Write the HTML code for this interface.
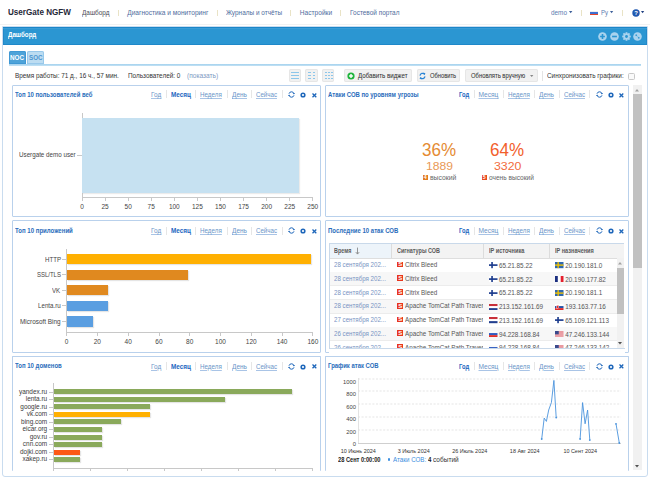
<!DOCTYPE html><html><head><meta charset="utf-8"><style>
html,body{margin:0;padding:0;width:650px;height:479px;overflow:hidden;background:#fff;font-family:"Liberation Sans", sans-serif;}
.t{position:absolute;white-space:nowrap;}
</style></head><body>
<div style="position:absolute;left:118.1px;top:9.5px;width:1.0px;height:6.5px;background:#e9e3c6;"></div>
<div style="position:absolute;left:216.5px;top:9.5px;width:1.0px;height:6.5px;background:#e9e3c6;"></div>
<div style="position:absolute;left:290.3px;top:9.5px;width:1.0px;height:6.5px;background:#e9e3c6;"></div>
<div style="position:absolute;left:340.3px;top:9.5px;width:1.0px;height:6.5px;background:#e9e3c6;"></div>
<div style="position:absolute;left:580.5px;top:9.5px;width:1.0px;height:6.5px;background:#e9e3c6;"></div>
<div style="position:absolute;left:621.9px;top:9.5px;width:1.0px;height:6.5px;background:#e9e3c6;"></div>
<svg style="position:absolute;left:568.5px;top:11px" width="4" height="3"><path d="M0 0H3.4L1.7 2.2Z" fill="#3d5f99"/></svg>
<div style="position:absolute;left:590px;top:10.5px;width:8px;height:1.5999999999999996px;background:#e9ecf2;"></div>
<div style="position:absolute;left:590px;top:12.1px;width:8px;height:1.5px;background:#3d6fd0;"></div>
<div style="position:absolute;left:590px;top:13.6px;width:8px;height:1.5999999999999996px;background:#e5452a;"></div>
<svg style="position:absolute;left:609.8px;top:11px" width="4" height="3"><path d="M0 0H3.2L1.6 2.2Z" fill="#3d5f99"/></svg>
<svg style="position:absolute;left:631.5px;top:8.5px" width="8" height="8" viewBox="0 0 8 8"><circle cx="4" cy="4" r="3.7" fill="#1f58b0"/><text x="4" y="6.4" font-size="6" font-weight="bold" text-anchor="middle" fill="#fff" font-family="Liberation Sans">?</text></svg>
<svg style="position:absolute;left:641.2px;top:11px" width="4" height="3"><path d="M0 0H3.2L1.6 2.2Z" fill="#1f3f80"/></svg>
<div style="position:absolute;left:0px;top:24px;width:650px;height:0.6000000000000014px;background:#f2f2f2;"></div>
<div style="position:absolute;left:2px;top:26px;width:644px;height:449px;border:1px solid #c9dcef;border-radius:0 0 3px 3px;background:#fff;"></div>
<div style="position:absolute;left:2.5px;top:26.5px;width:644.5px;height:18.299999999999997px;background:#2b96d2;box-shadow:inset 0 1px 0 #1b86c8, inset 0 2px 0 #3a9cd6, inset 0 -1px 0 #1f88c9, inset 1px 0 0 #2289c9, inset -1px 0 0 #2289c9;"></div>
<svg style="position:absolute;left:598.4px;top:31.6px" width="9" height="9" viewBox="0 0 9 9"><circle cx="4.5" cy="4.5" r="4.3" fill="#a9d3ee"/><path d="M4.5 2.1V6.9M2.1 4.5H6.9" stroke="#2a95d1" stroke-width="1.6"/></svg>
<svg style="position:absolute;left:610.0px;top:31.6px" width="9" height="9" viewBox="0 0 9 9"><circle cx="4.5" cy="4.5" r="4.3" fill="#a9d3ee"/><path d="M2.1 4.5H6.9" stroke="#2a95d1" stroke-width="1.6"/></svg>
<svg style="position:absolute;left:621.8px;top:31.6px" width="9" height="9" viewBox="0 0 9 9"><g fill="#a9d3ee"><circle cx="4.5" cy="4.5" r="3.2"/><rect x="3.6" y="0.2" width="1.8" height="8.6" transform="rotate(0 4.5 4.5)"/><rect x="3.6" y="0.2" width="1.8" height="8.6" transform="rotate(45 4.5 4.5)"/><rect x="3.6" y="0.2" width="1.8" height="8.6" transform="rotate(90 4.5 4.5)"/><rect x="3.6" y="0.2" width="1.8" height="8.6" transform="rotate(135 4.5 4.5)"/></g><circle cx="4.5" cy="4.5" r="1.4" fill="#2a95d1"/></svg>
<svg style="position:absolute;left:633.3px;top:31.6px" width="9" height="9" viewBox="0 0 9 9"><circle cx="4.5" cy="4.5" r="4.3" fill="#a9d3ee"/><path d="M2.0 3.3L3.3 2.0L4.5 4.5ZM7.0 5.7L5.7 7.0L4.5 4.5Z" fill="#2a95d1"/></svg>
<div style="position:absolute;left:8.8px;top:50.9px;width:17.0px;height:12.700000000000003px;background:#4ea3d9;border-radius:2px 2px 0 0;box-shadow:inset 0 0 0 1px #3f98d4;"></div>
<div style="position:absolute;left:27.2px;top:50.9px;width:16.599999999999998px;height:12.700000000000003px;background:#bcdcf1;border-radius:2px 2px 0 0;box-shadow:inset 0 0 0 1px #98c8ea;"></div>
<div style="position:absolute;left:8.5px;top:63.9px;width:632.9px;height:2.500000000000007px;background:linear-gradient(#a3d1ee,#c5e3f5);"></div>
<div style="position:absolute;left:288.6px;top:69.4px;width:12.299999999999955px;height:12.299999999999997px;background:#f1f1f1;border-radius:2px;box-shadow:inset 0 0 0 1px #e6e6e6;"></div>
<div style="position:absolute;left:305.4px;top:69.4px;width:12.300000000000011px;height:12.299999999999997px;background:#f1f1f1;border-radius:2px;box-shadow:inset 0 0 0 1px #e6e6e6;"></div>
<div style="position:absolute;left:322.4px;top:69.4px;width:12.100000000000023px;height:12.299999999999997px;background:#f1f1f1;border-radius:2px;box-shadow:inset 0 0 0 1px #e6e6e6;"></div>
<div style="position:absolute;left:291.2px;top:72px;width:7.400000000000034px;height:1px;background:#8cc6ea;"></div>
<div style="position:absolute;left:291.2px;top:75px;width:7.400000000000034px;height:1px;background:#8cc6ea;"></div>
<div style="position:absolute;left:291.2px;top:78px;width:7.400000000000034px;height:1px;background:#8cc6ea;"></div>
<div style="position:absolute;left:308.0px;top:72px;width:2.8000000000000114px;height:1px;background:#8cc6ea;"></div>
<div style="position:absolute;left:312.6px;top:72px;width:2.8000000000000114px;height:1px;background:#8cc6ea;"></div>
<div style="position:absolute;left:308.0px;top:75px;width:2.8000000000000114px;height:1px;background:#8cc6ea;"></div>
<div style="position:absolute;left:312.6px;top:75px;width:2.8000000000000114px;height:1px;background:#8cc6ea;"></div>
<div style="position:absolute;left:308.0px;top:78px;width:2.8000000000000114px;height:1px;background:#8cc6ea;"></div>
<div style="position:absolute;left:312.6px;top:78px;width:2.8000000000000114px;height:1px;background:#8cc6ea;"></div>
<div style="position:absolute;left:325.0px;top:72px;width:2.1999999999999886px;height:1px;background:#8cc6ea;"></div>
<div style="position:absolute;left:327.95px;top:72px;width:2.1999999999999886px;height:1px;background:#8cc6ea;"></div>
<div style="position:absolute;left:330.9px;top:72px;width:2.1999999999999886px;height:1px;background:#8cc6ea;"></div>
<div style="position:absolute;left:325.0px;top:75px;width:2.1999999999999886px;height:1px;background:#8cc6ea;"></div>
<div style="position:absolute;left:327.95px;top:75px;width:2.1999999999999886px;height:1px;background:#8cc6ea;"></div>
<div style="position:absolute;left:330.9px;top:75px;width:2.1999999999999886px;height:1px;background:#8cc6ea;"></div>
<div style="position:absolute;left:325.0px;top:78px;width:2.1999999999999886px;height:1px;background:#8cc6ea;"></div>
<div style="position:absolute;left:327.95px;top:78px;width:2.1999999999999886px;height:1px;background:#8cc6ea;"></div>
<div style="position:absolute;left:330.9px;top:78px;width:2.1999999999999886px;height:1px;background:#8cc6ea;"></div>
<div style="position:absolute;left:344.2px;top:69.4px;width:67.60000000000002px;height:12.299999999999997px;background:#f1f1f1;border-radius:2px;box-shadow:inset 0 0 0 1px #e6e6e6;"></div>
<svg style="position:absolute;left:346.6px;top:71.8px" width="8" height="8" viewBox="0 0 8 8"><circle cx="4" cy="4" r="3.6" fill="#1fb43c"/><path d="M4 2.1V5.9M2.1 4H5.9" stroke="#fff" stroke-width="1.4"/></svg>
<div style="position:absolute;left:416.5px;top:69.4px;width:43.80000000000001px;height:12.299999999999997px;background:#f1f1f1;border-radius:2px;box-shadow:inset 0 0 0 1px #e6e6e6;"></div>
<svg style="position:absolute;left:419.2px;top:72px" width="7" height="8" viewBox="0 0 7 8"><path d="M1 3.6A2.6 2.6 0 0 1 5.6 2.3" stroke="#2c86d6" stroke-width="1.2" fill="none"/><path d="M4.2 0.6L6.4 1.2L5.6 3.3Z" fill="#2c86d6"/><path d="M6 4.4A2.6 2.6 0 0 1 1.4 5.7" stroke="#2c86d6" stroke-width="1.2" fill="none"/><path d="M2.8 7.4L0.6 6.8L1.4 4.7Z" fill="#2c86d6"/></svg>
<div style="position:absolute;left:465.4px;top:69.4px;width:72.20000000000005px;height:12.299999999999997px;background:#f1f1f1;border-radius:2px;box-shadow:inset 0 0 0 1px #e6e6e6;"></div>
<svg style="position:absolute;left:529.5px;top:74.7px" width="4" height="3"><path d="M0 0H3.4L1.7 2Z" fill="#888"/></svg>
<div style="position:absolute;left:542.2px;top:70.5px;width:0.6999999999999318px;height:10.0px;background:#e4e4e4;"></div>
<div style="position:absolute;left:627.9px;top:73px;width:6.899999999999977px;height:6.599999999999994px;border:0.8px solid #c8c8c8;border-radius:1.5px;box-sizing:border-box;background:#fafafa;"></div>
<div style="position:absolute;left:633px;top:85px;width:8.5px;height:385px;background:#f1f1f1;"></div>
<div style="position:absolute;left:633px;top:94px;width:8.5px;height:174px;background:#c1c1c1;"></div>
<svg style="position:absolute;left:635.3px;top:88.5px" width="4" height="3"><path d="M0 2.5H4L2 0Z" fill="#a3a3a3"/></svg>
<svg style="position:absolute;left:635.3px;top:465px" width="4" height="3"><path d="M0 0H4L2 2.5Z" fill="#505050"/></svg>
<div style="position:absolute;left:12px;top:85px;width:307px;height:129.5px;border:1px solid #b9d1ec;border-radius:1px;"></div>
<div style="position:absolute;left:166.45000000000002px;top:90.4px;width:0.6999999999999886px;height:8.0px;background:#e6e6e6;"></div>
<div style="position:absolute;left:195.05px;top:90.4px;width:0.6999999999999886px;height:8.0px;background:#e6e6e6;"></div>
<div style="position:absolute;left:226.95000000000002px;top:90.4px;width:0.6999999999999886px;height:8.0px;background:#e6e6e6;"></div>
<div style="position:absolute;left:251.35px;top:90.4px;width:0.6999999999999886px;height:8.0px;background:#e6e6e6;"></div>
<div style="position:absolute;left:281.75px;top:90.4px;width:0.7000000000000455px;height:8.0px;background:#e6e6e6;"></div>
<svg style="position:absolute;left:288.1px;top:90.9px" width="7" height="7" viewBox="0 0 7 7"><path d="M1.0 2.7A2.6 2.6 0 0 1 5.9 2.4" stroke="#1d66ba" stroke-width="1.0" fill="none"/><path d="M4.7 2.1H7.0L5.9 3.5Z" fill="#1d66ba"/><path d="M6.0 4.3A2.6 2.6 0 0 1 1.1 4.6" stroke="#1d66ba" stroke-width="1.0" fill="none"/><path d="M2.3 4.9H0L1.1 3.5Z" fill="#1d66ba"/></svg>
<svg style="position:absolute;left:300px;top:91.60000000000001px" width="6" height="6" viewBox="0 0 6 6"><circle cx="3" cy="3" r="1.85" stroke="#1d66ba" stroke-width="1.5" fill="none"/></svg>
<svg style="position:absolute;left:311.79999999999995px;top:92.5px" width="5" height="5" viewBox="0 0 5 5"><path d="M0.5 0.5L4.3 4.3M4.3 0.5L0.5 4.3" stroke="#1d66ba" stroke-width="1.3"/></svg>
<div style="position:absolute;left:325px;top:85px;width:301.5px;height:129.5px;border:1px solid #b9d1ec;border-radius:1px;"></div>
<div style="position:absolute;left:473.95px;top:90.4px;width:0.7000000000000455px;height:8.0px;background:#e6e6e6;"></div>
<div style="position:absolute;left:502.54999999999995px;top:90.4px;width:0.7000000000000455px;height:8.0px;background:#e6e6e6;"></div>
<div style="position:absolute;left:534.4499999999999px;top:90.4px;width:0.7000000000000455px;height:8.0px;background:#e6e6e6;"></div>
<div style="position:absolute;left:558.85px;top:90.4px;width:0.7000000000000455px;height:8.0px;background:#e6e6e6;"></div>
<div style="position:absolute;left:589.25px;top:90.4px;width:0.7000000000000455px;height:8.0px;background:#e6e6e6;"></div>
<svg style="position:absolute;left:595.6px;top:90.9px" width="7" height="7" viewBox="0 0 7 7"><path d="M1.0 2.7A2.6 2.6 0 0 1 5.9 2.4" stroke="#1d66ba" stroke-width="1.0" fill="none"/><path d="M4.7 2.1H7.0L5.9 3.5Z" fill="#1d66ba"/><path d="M6.0 4.3A2.6 2.6 0 0 1 1.1 4.6" stroke="#1d66ba" stroke-width="1.0" fill="none"/><path d="M2.3 4.9H0L1.1 3.5Z" fill="#1d66ba"/></svg>
<svg style="position:absolute;left:607.5px;top:91.60000000000001px" width="6" height="6" viewBox="0 0 6 6"><circle cx="3" cy="3" r="1.85" stroke="#1d66ba" stroke-width="1.5" fill="none"/></svg>
<svg style="position:absolute;left:619.3px;top:92.5px" width="5" height="5" viewBox="0 0 5 5"><path d="M0.5 0.5L4.3 4.3M4.3 0.5L0.5 4.3" stroke="#1d66ba" stroke-width="1.3"/></svg>
<div style="position:absolute;left:12px;top:220px;width:307px;height:130.5px;border:1px solid #b9d1ec;border-radius:1px;"></div>
<div style="position:absolute;left:166.45000000000002px;top:226.5px;width:0.6999999999999886px;height:8.0px;background:#e6e6e6;"></div>
<div style="position:absolute;left:195.05px;top:226.5px;width:0.6999999999999886px;height:8.0px;background:#e6e6e6;"></div>
<div style="position:absolute;left:226.95000000000002px;top:226.5px;width:0.6999999999999886px;height:8.0px;background:#e6e6e6;"></div>
<div style="position:absolute;left:251.35px;top:226.5px;width:0.6999999999999886px;height:8.0px;background:#e6e6e6;"></div>
<div style="position:absolute;left:281.75px;top:226.5px;width:0.7000000000000455px;height:8.0px;background:#e6e6e6;"></div>
<svg style="position:absolute;left:288.1px;top:227.0px" width="7" height="7" viewBox="0 0 7 7"><path d="M1.0 2.7A2.6 2.6 0 0 1 5.9 2.4" stroke="#1d66ba" stroke-width="1.0" fill="none"/><path d="M4.7 2.1H7.0L5.9 3.5Z" fill="#1d66ba"/><path d="M6.0 4.3A2.6 2.6 0 0 1 1.1 4.6" stroke="#1d66ba" stroke-width="1.0" fill="none"/><path d="M2.3 4.9H0L1.1 3.5Z" fill="#1d66ba"/></svg>
<svg style="position:absolute;left:300px;top:227.7px" width="6" height="6" viewBox="0 0 6 6"><circle cx="3" cy="3" r="1.85" stroke="#1d66ba" stroke-width="1.5" fill="none"/></svg>
<svg style="position:absolute;left:311.79999999999995px;top:228.6px" width="5" height="5" viewBox="0 0 5 5"><path d="M0.5 0.5L4.3 4.3M4.3 0.5L0.5 4.3" stroke="#1d66ba" stroke-width="1.3"/></svg>
<div style="position:absolute;left:325px;top:220px;width:301.5px;height:130.5px;border:1px solid #b9d1ec;border-radius:1px;"></div>
<div style="position:absolute;left:473.95px;top:226.5px;width:0.7000000000000455px;height:8.0px;background:#e6e6e6;"></div>
<div style="position:absolute;left:502.54999999999995px;top:226.5px;width:0.7000000000000455px;height:8.0px;background:#e6e6e6;"></div>
<div style="position:absolute;left:534.4499999999999px;top:226.5px;width:0.7000000000000455px;height:8.0px;background:#e6e6e6;"></div>
<div style="position:absolute;left:558.85px;top:226.5px;width:0.7000000000000455px;height:8.0px;background:#e6e6e6;"></div>
<div style="position:absolute;left:589.25px;top:226.5px;width:0.7000000000000455px;height:8.0px;background:#e6e6e6;"></div>
<svg style="position:absolute;left:595.6px;top:227.0px" width="7" height="7" viewBox="0 0 7 7"><path d="M1.0 2.7A2.6 2.6 0 0 1 5.9 2.4" stroke="#1d66ba" stroke-width="1.0" fill="none"/><path d="M4.7 2.1H7.0L5.9 3.5Z" fill="#1d66ba"/><path d="M6.0 4.3A2.6 2.6 0 0 1 1.1 4.6" stroke="#1d66ba" stroke-width="1.0" fill="none"/><path d="M2.3 4.9H0L1.1 3.5Z" fill="#1d66ba"/></svg>
<svg style="position:absolute;left:607.5px;top:227.7px" width="6" height="6" viewBox="0 0 6 6"><circle cx="3" cy="3" r="1.85" stroke="#1d66ba" stroke-width="1.5" fill="none"/></svg>
<svg style="position:absolute;left:619.3px;top:228.6px" width="5" height="5" viewBox="0 0 5 5"><path d="M0.5 0.5L4.3 4.3M4.3 0.5L0.5 4.3" stroke="#1d66ba" stroke-width="1.3"/></svg>
<div style="position:absolute;left:12px;top:356px;width:307px;height:114px;border:1px solid #b9d1ec;border-bottom:none;border-radius:1px;"></div>
<div style="position:absolute;left:166.45000000000002px;top:362.3px;width:0.6999999999999886px;height:8.0px;background:#e6e6e6;"></div>
<div style="position:absolute;left:195.05px;top:362.3px;width:0.6999999999999886px;height:8.0px;background:#e6e6e6;"></div>
<div style="position:absolute;left:226.95000000000002px;top:362.3px;width:0.6999999999999886px;height:8.0px;background:#e6e6e6;"></div>
<div style="position:absolute;left:251.35px;top:362.3px;width:0.6999999999999886px;height:8.0px;background:#e6e6e6;"></div>
<div style="position:absolute;left:281.75px;top:362.3px;width:0.7000000000000455px;height:8.0px;background:#e6e6e6;"></div>
<svg style="position:absolute;left:288.1px;top:362.8px" width="7" height="7" viewBox="0 0 7 7"><path d="M1.0 2.7A2.6 2.6 0 0 1 5.9 2.4" stroke="#1d66ba" stroke-width="1.0" fill="none"/><path d="M4.7 2.1H7.0L5.9 3.5Z" fill="#1d66ba"/><path d="M6.0 4.3A2.6 2.6 0 0 1 1.1 4.6" stroke="#1d66ba" stroke-width="1.0" fill="none"/><path d="M2.3 4.9H0L1.1 3.5Z" fill="#1d66ba"/></svg>
<svg style="position:absolute;left:300px;top:363.5px" width="6" height="6" viewBox="0 0 6 6"><circle cx="3" cy="3" r="1.85" stroke="#1d66ba" stroke-width="1.5" fill="none"/></svg>
<svg style="position:absolute;left:311.79999999999995px;top:364.40000000000003px" width="5" height="5" viewBox="0 0 5 5"><path d="M0.5 0.5L4.3 4.3M4.3 0.5L0.5 4.3" stroke="#1d66ba" stroke-width="1.3"/></svg>
<div style="position:absolute;left:325px;top:356px;width:301.5px;height:114px;border:1px solid #b9d1ec;border-bottom:none;border-radius:1px;"></div>
<div style="position:absolute;left:473.95px;top:362.3px;width:0.7000000000000455px;height:8.0px;background:#e6e6e6;"></div>
<div style="position:absolute;left:502.54999999999995px;top:362.3px;width:0.7000000000000455px;height:8.0px;background:#e6e6e6;"></div>
<div style="position:absolute;left:534.4499999999999px;top:362.3px;width:0.7000000000000455px;height:8.0px;background:#e6e6e6;"></div>
<div style="position:absolute;left:558.85px;top:362.3px;width:0.7000000000000455px;height:8.0px;background:#e6e6e6;"></div>
<div style="position:absolute;left:589.25px;top:362.3px;width:0.7000000000000455px;height:8.0px;background:#e6e6e6;"></div>
<svg style="position:absolute;left:595.6px;top:362.8px" width="7" height="7" viewBox="0 0 7 7"><path d="M1.0 2.7A2.6 2.6 0 0 1 5.9 2.4" stroke="#1d66ba" stroke-width="1.0" fill="none"/><path d="M4.7 2.1H7.0L5.9 3.5Z" fill="#1d66ba"/><path d="M6.0 4.3A2.6 2.6 0 0 1 1.1 4.6" stroke="#1d66ba" stroke-width="1.0" fill="none"/><path d="M2.3 4.9H0L1.1 3.5Z" fill="#1d66ba"/></svg>
<svg style="position:absolute;left:607.5px;top:363.5px" width="6" height="6" viewBox="0 0 6 6"><circle cx="3" cy="3" r="1.85" stroke="#1d66ba" stroke-width="1.5" fill="none"/></svg>
<svg style="position:absolute;left:619.3px;top:364.40000000000003px" width="5" height="5" viewBox="0 0 5 5"><path d="M0.5 0.5L4.3 4.3M4.3 0.5L0.5 4.3" stroke="#1d66ba" stroke-width="1.3"/></svg>
<div style="position:absolute;left:81.6px;top:112.6px;width:0.8000000000000114px;height:84.80000000000001px;background:#c8c8c8;"></div>
<div style="position:absolute;left:82.4px;top:118px;width:216.49999999999997px;height:74.6px;background:#c6e1f1;box-shadow:1px 1px 1px rgba(0,0,0,0.08);"></div>
<div style="position:absolute;left:81.6px;top:196.8px;width:231.79999999999998px;height:0.799999999999983px;background:#c8c8c8;"></div>
<div style="position:absolute;left:81.6px;top:197.4px;width:0.8000000000000114px;height:3.5999999999999943px;background:#c8c8c8;"></div>
<div style="position:absolute;left:104.67999999999999px;top:197.4px;width:0.8000000000000114px;height:3.5999999999999943px;background:#c8c8c8;"></div>
<div style="position:absolute;left:127.75999999999999px;top:197.4px;width:0.8000000000000114px;height:3.5999999999999943px;background:#c8c8c8;"></div>
<div style="position:absolute;left:150.84px;top:197.4px;width:0.8000000000000114px;height:3.5999999999999943px;background:#c8c8c8;"></div>
<div style="position:absolute;left:173.92px;top:197.4px;width:0.8000000000000114px;height:3.5999999999999943px;background:#c8c8c8;"></div>
<div style="position:absolute;left:196.99999999999997px;top:197.4px;width:0.8000000000000114px;height:3.5999999999999943px;background:#c8c8c8;"></div>
<div style="position:absolute;left:220.07999999999998px;top:197.4px;width:0.8000000000000114px;height:3.5999999999999943px;background:#c8c8c8;"></div>
<div style="position:absolute;left:243.16px;top:197.4px;width:0.8000000000000114px;height:3.5999999999999943px;background:#c8c8c8;"></div>
<div style="position:absolute;left:266.24px;top:197.4px;width:0.7999999999999545px;height:3.5999999999999943px;background:#c8c8c8;"></div>
<div style="position:absolute;left:289.32px;top:197.4px;width:0.7999999999999545px;height:3.5999999999999943px;background:#c8c8c8;"></div>
<div style="position:absolute;left:312.4px;top:197.4px;width:0.7999999999999545px;height:3.5999999999999943px;background:#c8c8c8;"></div>
<div style="position:absolute;left:77px;top:154.6px;width:4.599999999999994px;height:0.8000000000000114px;background:#c8c8c8;"></div>
<div style="position:absolute;left:422.6px;top:175.2px;width:5.0px;height:4.900000000000006px;background:#e27c22;"></div>
<div style="position:absolute;left:481.7px;top:175.2px;width:4.900000000000034px;height:4.900000000000006px;background:#e8491d;"></div>
<div style="position:absolute;left:66.2px;top:248.6px;width:0.7999999999999972px;height:84.00000000000003px;background:#c8c8c8;"></div>
<div style="position:absolute;left:66.2px;top:332.0px;width:247.2px;height:0.8000000000000114px;background:#c8c8c8;"></div>
<div style="position:absolute;left:66.19999999999999px;top:332.6px;width:0.8000000000000114px;height:3.599999999999966px;background:#c8c8c8;"></div>
<div style="position:absolute;left:96.97999999999999px;top:332.6px;width:0.8000000000000114px;height:3.599999999999966px;background:#c8c8c8;"></div>
<div style="position:absolute;left:127.75999999999999px;top:332.6px;width:0.8000000000000114px;height:3.599999999999966px;background:#c8c8c8;"></div>
<div style="position:absolute;left:158.54px;top:332.6px;width:0.8000000000000114px;height:3.599999999999966px;background:#c8c8c8;"></div>
<div style="position:absolute;left:189.31999999999996px;top:332.6px;width:0.8000000000000114px;height:3.599999999999966px;background:#c8c8c8;"></div>
<div style="position:absolute;left:220.1px;top:332.6px;width:0.8000000000000114px;height:3.599999999999966px;background:#c8c8c8;"></div>
<div style="position:absolute;left:250.87999999999997px;top:332.6px;width:0.8000000000000114px;height:3.599999999999966px;background:#c8c8c8;"></div>
<div style="position:absolute;left:281.65999999999997px;top:332.6px;width:0.7999999999999545px;height:3.599999999999966px;background:#c8c8c8;"></div>
<div style="position:absolute;left:312.44px;top:332.6px;width:0.7999999999999545px;height:3.599999999999966px;background:#c8c8c8;"></div>
<div style="position:absolute;left:67.0px;top:254px;width:244.301px;height:10.100000000000023px;background:#ffb001;box-shadow:1px 1px 1px rgba(0,0,0,0.1);"></div>
<div style="position:absolute;left:62px;top:258.65000000000003px;width:4.200000000000003px;height:0.7999999999999545px;background:#c8c8c8;"></div>
<div style="position:absolute;left:67.0px;top:269.5px;width:121.18099999999998px;height:10.399999999999977px;background:#e0891f;box-shadow:1px 1px 1px rgba(0,0,0,0.1);"></div>
<div style="position:absolute;left:62px;top:274.3px;width:4.200000000000003px;height:0.7999999999999545px;background:#c8c8c8;"></div>
<div style="position:absolute;left:67.0px;top:285px;width:41.15299999999999px;height:10.399999999999977px;background:#e0891f;box-shadow:1px 1px 1px rgba(0,0,0,0.1);"></div>
<div style="position:absolute;left:62px;top:289.8px;width:4.200000000000003px;height:0.7999999999999545px;background:#c8c8c8;"></div>
<div style="position:absolute;left:67.0px;top:300.8px;width:41.15299999999999px;height:10.099999999999966px;background:#5a9ee1;box-shadow:1px 1px 1px rgba(0,0,0,0.1);"></div>
<div style="position:absolute;left:62px;top:305.45000000000005px;width:4.200000000000003px;height:0.7999999999999545px;background:#c8c8c8;"></div>
<div style="position:absolute;left:67.0px;top:316.3px;width:25.76299999999999px;height:10.300000000000011px;background:#5a9ee1;box-shadow:1px 1px 1px rgba(0,0,0,0.1);"></div>
<div style="position:absolute;left:62px;top:321.05000000000007px;width:4.200000000000003px;height:0.7999999999999545px;background:#c8c8c8;"></div>
<div style="position:absolute;left:328.5px;top:242.8px;width:295.5px;height:106px;border:1px solid #c9d9ea;border-bottom:1px solid #c9d9ea;box-sizing:border-box;overflow:hidden;"></div>
<div style="position:absolute;left:329.5px;top:243.8px;width:62.0px;height:14.300000000000011px;background:#edf4fa;"></div>
<div style="position:absolute;left:391.5px;top:243.8px;width:232.0px;height:14.300000000000011px;background:#f3f3f3;"></div>
<div style="position:absolute;left:329.5px;top:257.6px;width:294.0px;height:0.6999999999999886px;background:#dedede;"></div>
<div style="position:absolute;left:391.15px;top:243.8px;width:0.7000000000000455px;height:14.300000000000011px;background:#dcdcdc;"></div>
<div style="position:absolute;left:483.15px;top:243.8px;width:0.7000000000000455px;height:14.300000000000011px;background:#dcdcdc;"></div>
<div style="position:absolute;left:548.9499999999999px;top:243.8px;width:0.7000000000000455px;height:14.300000000000011px;background:#dcdcdc;"></div>
<svg style="position:absolute;left:354.6px;top:246.5px" width="5" height="8" viewBox="0 0 5 8"><path d="M2.5 0.6V7.0M0.8 5.1L2.5 7.1L4.2 5.1" stroke="#8a8a8a" stroke-width="0.9" fill="none"/></svg>
<div style="position:absolute;left:329.5px;top:258.3px;width:294px;height:90.2px;overflow:hidden;">
<div style="position:absolute;left:0;top:13.25px;width:294px;height:0.6px;background:#ececec;"></div>
<div style="position:absolute;left:0;top:13.75px;width:294px;height:13.75px;background:#f7f7f7;"></div>
<div style="position:absolute;left:0;top:27.00px;width:294px;height:0.6px;background:#ececec;"></div>
<div style="position:absolute;left:0;top:40.75px;width:294px;height:0.6px;background:#ececec;"></div>
<div style="position:absolute;left:0;top:41.25px;width:294px;height:13.75px;background:#f7f7f7;"></div>
<div style="position:absolute;left:0;top:54.50px;width:294px;height:0.6px;background:#ececec;"></div>
<div style="position:absolute;left:0;top:68.25px;width:294px;height:0.6px;background:#ececec;"></div>
<div style="position:absolute;left:0;top:68.75px;width:294px;height:13.75px;background:#f7f7f7;"></div>
<div style="position:absolute;left:0;top:82.00px;width:294px;height:0.6px;background:#ececec;"></div>
<div style="position:absolute;left:0;top:95.75px;width:294px;height:0.6px;background:#ececec;"></div>
</div>
<div style="position:absolute;left:397px;top:261.65px;width:6.199999999999989px;height:5.800000000000011px;background:#e8361d;"></div>
<svg style="position:absolute;left:489px;top:262.40px" width="8.5" height="6.2" viewBox="0 0 17 12" preserveAspectRatio="none"><rect width="17" height="12" fill="#fff"/><rect x="4.5" width="3.2" height="12" fill="#1a3a8c"/><rect y="4.4" width="17" height="3.2" fill="#1a3a8c"/></svg>
<svg style="position:absolute;left:555px;top:262.40px" width="8.5" height="6.2" viewBox="0 0 17 12" preserveAspectRatio="none"><rect width="17" height="12" fill="#2f68b0"/><rect x="5" width="2.6" height="12" fill="#f5c400"/><rect y="4.7" width="17" height="2.6" fill="#f5c400"/></svg>
<div style="position:absolute;left:397px;top:275.4px;width:6.199999999999989px;height:5.800000000000011px;background:#e8361d;"></div>
<svg style="position:absolute;left:489px;top:276.15px" width="8.5" height="6.2" viewBox="0 0 17 12" preserveAspectRatio="none"><rect width="17" height="12" fill="#fff"/><rect x="4.5" width="3.2" height="12" fill="#1a3a8c"/><rect y="4.4" width="17" height="3.2" fill="#1a3a8c"/></svg>
<svg style="position:absolute;left:555px;top:276.15px" width="8.5" height="6.2" viewBox="0 0 17 12" preserveAspectRatio="none"><rect width="17" height="12" fill="#fff"/><rect width="5.6" height="12" fill="#1b2f80"/><rect x="11.4" width="5.6" height="12" fill="#e5202e"/></svg>
<div style="position:absolute;left:397px;top:289.15px;width:6.199999999999989px;height:5.800000000000011px;background:#e8361d;"></div>
<svg style="position:absolute;left:489px;top:289.90px" width="8.5" height="6.2" viewBox="0 0 17 12" preserveAspectRatio="none"><rect width="17" height="12" fill="#fff"/><rect x="4.5" width="3.2" height="12" fill="#1a3a8c"/><rect y="4.4" width="17" height="3.2" fill="#1a3a8c"/></svg>
<svg style="position:absolute;left:555px;top:289.90px" width="8.5" height="6.2" viewBox="0 0 17 12" preserveAspectRatio="none"><rect width="17" height="12" fill="#2f68b0"/><rect x="5" width="2.6" height="12" fill="#f5c400"/><rect y="4.7" width="17" height="2.6" fill="#f5c400"/></svg>
<div style="position:absolute;left:397px;top:302.9px;width:6.199999999999989px;height:5.800000000000011px;background:#e8361d;"></div>
<svg style="position:absolute;left:489px;top:303.65px" width="8.5" height="6.2" viewBox="0 0 17 12" preserveAspectRatio="none"><rect width="17" height="12" fill="#fff"/><rect width="17" height="4" fill="#c8303a"/><rect y="8" width="17" height="4" fill="#233f8f"/></svg>
<svg style="position:absolute;left:555px;top:303.65px" width="8.5" height="6.2" viewBox="0 0 17 12" preserveAspectRatio="none"><rect width="17" height="12" fill="#fff"/><rect y="4" width="17" height="4" fill="#2454a8"/><rect y="8" width="17" height="4" fill="#e02a2a"/><rect x="3" y="2.5" width="4.5" height="6" fill="#e03030" stroke="#fff" stroke-width="0.8"/></svg>
<div style="position:absolute;left:397px;top:316.65px;width:6.199999999999989px;height:5.800000000000011px;background:#e8361d;"></div>
<svg style="position:absolute;left:489px;top:317.40px" width="8.5" height="6.2" viewBox="0 0 17 12" preserveAspectRatio="none"><rect width="17" height="12" fill="#fff"/><rect width="17" height="4" fill="#c8303a"/><rect y="8" width="17" height="4" fill="#233f8f"/></svg>
<svg style="position:absolute;left:555px;top:317.40px" width="8.5" height="6.2" viewBox="0 0 17 12" preserveAspectRatio="none"><rect width="17" height="12" fill="#fff"/><rect x="4.5" width="3.2" height="12" fill="#1a3a8c"/><rect y="4.4" width="17" height="3.2" fill="#1a3a8c"/></svg>
<div style="position:absolute;left:397px;top:330.4px;width:6.199999999999989px;height:5.800000000000011px;background:#e8361d;"></div>
<svg style="position:absolute;left:489px;top:331.15px" width="8.5" height="6.2" viewBox="0 0 17 12" preserveAspectRatio="none"><rect width="17" height="12" fill="#fafafa"/><rect y="4" width="17" height="4" fill="#2f5bc0"/><rect y="8" width="17" height="4" fill="#e0302a"/></svg>
<svg style="position:absolute;left:555px;top:331.15px" width="8.5" height="6.2" viewBox="0 0 17 12" preserveAspectRatio="none"><rect width="17" height="12" fill="#fff"/><rect y="0.00" width="17" height="0.92" fill="#d3333f"/><rect y="1.85" width="17" height="0.92" fill="#d3333f"/><rect y="3.70" width="17" height="0.92" fill="#d3333f"/><rect y="5.55" width="17" height="0.92" fill="#d3333f"/><rect y="7.40" width="17" height="0.92" fill="#d3333f"/><rect y="9.25" width="17" height="0.92" fill="#d3333f"/><rect y="11.10" width="17" height="0.92" fill="#d3333f"/><rect width="7.5" height="6.5" fill="#3a4a8c"/></svg>
<div style="position:absolute;left:397px;top:344.15px;width:6.199999999999989px;height:5.800000000000011px;background:#e8361d;"></div>
<svg style="position:absolute;left:489px;top:344.90px" width="8.5" height="6.2" viewBox="0 0 17 12" preserveAspectRatio="none"><rect width="17" height="12" fill="#fafafa"/><rect y="4" width="17" height="4" fill="#2f5bc0"/><rect y="8" width="17" height="4" fill="#e0302a"/></svg>
<svg style="position:absolute;left:555px;top:344.90px" width="8.5" height="6.2" viewBox="0 0 17 12" preserveAspectRatio="none"><rect width="17" height="12" fill="#fff"/><rect y="0.00" width="17" height="0.92" fill="#d3333f"/><rect y="1.85" width="17" height="0.92" fill="#d3333f"/><rect y="3.70" width="17" height="0.92" fill="#d3333f"/><rect y="5.55" width="17" height="0.92" fill="#d3333f"/><rect y="7.40" width="17" height="0.92" fill="#d3333f"/><rect y="9.25" width="17" height="0.92" fill="#d3333f"/><rect y="11.10" width="17" height="0.92" fill="#d3333f"/><rect width="7.5" height="6.5" fill="#3a4a8c"/></svg>
<div style="position:absolute;z-index:3;left:328.5px;top:348px;width:296px;height:3.5px;background:#fff;border-top:1px solid #c9d9ea;"></div>
<div style="position:absolute;left:617px;top:258.3px;width:6.5px;height:90.19999999999999px;background:#f1f1f1;"></div>
<div style="position:absolute;left:617px;top:267.8px;width:6.5px;height:46.69999999999999px;background:#c1c1c1;"></div>
<svg style="position:absolute;left:618.3px;top:261.5px" width="4" height="3"><path d="M0 2.5H4L2 0Z" fill="#a3a3a3"/></svg>
<svg style="position:absolute;left:618.3px;top:342.3px" width="4" height="3"><path d="M0 0H4L2 2.5Z" fill="#505050"/></svg>
<div style="position:absolute;left:52.9px;top:383.4px;width:0.8000000000000043px;height:86.60000000000002px;background:#c8c8c8;"></div>
<div style="position:absolute;left:53px;top:467.7px;width:260.4px;height:0.8000000000000114px;background:#c8c8c8;"></div>
<div style="position:absolute;left:53.2px;top:468.3px;width:0.7999999999999972px;height:2.6999999999999886px;background:#c8c8c8;"></div>
<div style="position:absolute;left:90.15px;top:468.3px;width:0.8000000000000114px;height:2.6999999999999886px;background:#c8c8c8;"></div>
<div style="position:absolute;left:127.1px;top:468.3px;width:0.8000000000000114px;height:2.6999999999999886px;background:#c8c8c8;"></div>
<div style="position:absolute;left:164.05px;top:468.3px;width:0.8000000000000114px;height:2.6999999999999886px;background:#c8c8c8;"></div>
<div style="position:absolute;left:201.0px;top:468.3px;width:0.8000000000000114px;height:2.6999999999999886px;background:#c8c8c8;"></div>
<div style="position:absolute;left:237.95px;top:468.3px;width:0.8000000000000114px;height:2.6999999999999886px;background:#c8c8c8;"></div>
<div style="position:absolute;left:274.90000000000003px;top:468.3px;width:0.7999999999999545px;height:2.6999999999999886px;background:#c8c8c8;"></div>
<div style="position:absolute;left:311.8500000000001px;top:468.3px;width:0.7999999999999545px;height:2.6999999999999886px;background:#c8c8c8;"></div>
<div style="position:absolute;left:53.7px;top:389.4px;width:238.3px;height:5.0px;background:#8aa95b;box-shadow:1px 1px 1px rgba(0,0,0,0.1);"></div>
<div style="position:absolute;left:48.6px;top:391.5px;width:4.299999999999997px;height:0.7999999999999545px;background:#c8c8c8;"></div>
<div style="position:absolute;left:53.7px;top:396.91999999999996px;width:171.0px;height:5.0px;background:#8aa95b;box-shadow:1px 1px 1px rgba(0,0,0,0.1);"></div>
<div style="position:absolute;left:48.6px;top:399.02px;width:4.299999999999997px;height:0.7999999999999545px;background:#c8c8c8;"></div>
<div style="position:absolute;left:53.7px;top:404.44px;width:96.60000000000001px;height:5.0px;background:#8aa95b;box-shadow:1px 1px 1px rgba(0,0,0,0.1);"></div>
<div style="position:absolute;left:48.6px;top:406.54px;width:4.299999999999997px;height:0.7999999999999545px;background:#c8c8c8;"></div>
<div style="position:absolute;left:53.7px;top:411.96px;width:96.60000000000001px;height:5.0px;background:#ffb001;box-shadow:1px 1px 1px rgba(0,0,0,0.1);"></div>
<div style="position:absolute;left:48.6px;top:414.06px;width:4.299999999999997px;height:0.7999999999999545px;background:#c8c8c8;"></div>
<div style="position:absolute;left:53.7px;top:419.47999999999996px;width:67.1px;height:5.0px;background:#8aa95b;box-shadow:1px 1px 1px rgba(0,0,0,0.1);"></div>
<div style="position:absolute;left:48.6px;top:421.58px;width:4.299999999999997px;height:0.7999999999999545px;background:#c8c8c8;"></div>
<div style="position:absolute;left:53.7px;top:427.0px;width:48.599999999999994px;height:5.0px;background:#8aa95b;box-shadow:1px 1px 1px rgba(0,0,0,0.1);"></div>
<div style="position:absolute;left:48.6px;top:429.1px;width:4.299999999999997px;height:0.7999999999999545px;background:#c8c8c8;"></div>
<div style="position:absolute;left:53.7px;top:434.52px;width:48.599999999999994px;height:5.0px;background:#8aa95b;box-shadow:1px 1px 1px rgba(0,0,0,0.1);"></div>
<div style="position:absolute;left:48.6px;top:436.62px;width:4.299999999999997px;height:0.7999999999999545px;background:#c8c8c8;"></div>
<div style="position:absolute;left:53.7px;top:442.03999999999996px;width:48.599999999999994px;height:5.0px;background:#8aa95b;box-shadow:1px 1px 1px rgba(0,0,0,0.1);"></div>
<div style="position:absolute;left:48.6px;top:444.14px;width:4.299999999999997px;height:0.7999999999999545px;background:#c8c8c8;"></div>
<div style="position:absolute;left:53.7px;top:449.55999999999995px;width:26.0px;height:5.0px;background:#fd5816;box-shadow:1px 1px 1px rgba(0,0,0,0.1);"></div>
<div style="position:absolute;left:48.6px;top:451.65999999999997px;width:4.299999999999997px;height:0.7999999999999545px;background:#c8c8c8;"></div>
<div style="position:absolute;left:53.7px;top:457.08px;width:26.0px;height:5.0px;background:#8aa95b;box-shadow:1px 1px 1px rgba(0,0,0,0.1);"></div>
<div style="position:absolute;left:48.6px;top:459.18px;width:4.299999999999997px;height:0.7999999999999545px;background:#c8c8c8;"></div>
<div style="position:absolute;left:358.1px;top:378.2px;width:0.7999999999999545px;height:65.30000000000001px;background:#e3e3e3;"></div>
<svg style="position:absolute;left:358px;top:377.5px" width="263" height="2"><path d="M0 1H263" stroke="#dedede" stroke-width="0.8" stroke-dasharray="2 1.6"/></svg>
<svg style="position:absolute;left:358px;top:390.4px" width="263" height="2"><path d="M0 1H263" stroke="#dedede" stroke-width="0.8" stroke-dasharray="2 1.6"/></svg>
<svg style="position:absolute;left:358px;top:403.3px" width="263" height="2"><path d="M0 1H263" stroke="#dedede" stroke-width="0.8" stroke-dasharray="2 1.6"/></svg>
<svg style="position:absolute;left:358px;top:416.1px" width="263" height="2"><path d="M0 1H263" stroke="#dedede" stroke-width="0.8" stroke-dasharray="2 1.6"/></svg>
<svg style="position:absolute;left:358px;top:429.3px" width="263" height="2"><path d="M0 1H263" stroke="#dedede" stroke-width="0.8" stroke-dasharray="2 1.6"/></svg>
<div style="position:absolute;left:357.5px;top:443.2px;width:263.5px;height:0.8000000000000114px;background:#cfcfcf;"></div>
<div style="position:absolute;left:388px;top:458.4px;width:2.4px;height:2.4px;border-radius:50%;background:#3d8fe0;"></div>
<svg style="position:absolute;left:0;top:0" width="650" height="479"><polyline points="541.7,439.0 544.2,418.1 546.4,421.4 548.7,410.0 551.4,402.6 553.9,380.4 556.2,417.6" fill="none" stroke="#4a93dc" stroke-width="0.9" stroke-linejoin="round"/><polyline points="580.1,439.0 582.6,402.6 585.1,423.8 587.6,410.0 589.8,440.1" fill="none" stroke="#4a93dc" stroke-width="0.9" stroke-linejoin="round"/><polyline points="616.0,423.8 619.3,443.0" fill="none" stroke="#4a93dc" stroke-width="0.9" stroke-linejoin="round"/><circle cx="541.7" cy="439" r="0.9" fill="#4a93dc"/><circle cx="556.2" cy="417.6" r="0.9" fill="#4a93dc"/><circle cx="580.1" cy="439" r="0.9" fill="#4a93dc"/><circle cx="589.8" cy="440.1" r="0.9" fill="#4a93dc"/><circle cx="616" cy="423.8" r="0.9" fill="#4a93dc"/><circle cx="619.3" cy="443" r="0.9" fill="#4a93dc"/></svg>
<div id="t0" class="t" style="left:7.75px;transform-origin:left center;top:7.77px;font-size:8.2px;line-height:10.66px;font-weight:bold;color:#1f2838;transform:scaleX(0.988);">UserGate NGFW</div>
<div id="t1" class="t" style="left:81.80px;transform-origin:left center;top:9.11px;font-size:6.6px;line-height:8.58px;font-weight:normal;color:#4a4a55;transform:scaleX(0.974);">Дашборд</div>
<div id="t2" class="t" style="left:127.20px;transform-origin:left center;top:9.11px;font-size:6.6px;line-height:8.58px;font-weight:normal;color:#4f6d9e;">Диагностика и мониторинг</div>
<div id="t3" class="t" style="left:225.80px;transform-origin:left center;top:9.11px;font-size:6.6px;line-height:8.58px;font-weight:normal;color:#4f6d9e;transform:scaleX(0.976);">Журналы и отчёты</div>
<div id="t4" class="t" style="left:299.80px;transform-origin:left center;top:9.11px;font-size:6.6px;line-height:8.58px;font-weight:normal;color:#4f6d9e;">Настройки</div>
<div id="t5" class="t" style="left:349.50px;transform-origin:left center;top:9.11px;font-size:6.6px;line-height:8.58px;font-weight:normal;color:#4f6d9e;transform:scaleX(0.979);">Гостевой портал</div>
<div id="t6" class="t" style="left:551.00px;transform-origin:left center;top:9.11px;font-size:6.6px;line-height:8.58px;font-weight:normal;color:#5a7bb0;transform:scaleX(0.970);">demo</div>
<div id="t7" class="t" style="left:600.60px;transform-origin:left center;top:9.11px;font-size:6.6px;line-height:8.58px;font-weight:normal;color:#5a7bb0;transform:scaleX(0.922);">Ру</div>
<div id="t8" class="t" style="left:8.10px;transform-origin:left center;top:30.43px;font-size:7.5px;line-height:9.75px;font-weight:bold;color:#fff;transform:scaleX(0.826);">Дашборд</div>
<div id="t9" class="t" style="left:10.30px;transform-origin:left center;top:53.98px;font-size:6.8px;line-height:8.84px;font-weight:bold;color:#fff;transform:scaleX(0.927);">NOC</div>
<div id="t10" class="t" style="left:28.80px;transform-origin:left center;top:53.98px;font-size:6.8px;line-height:8.84px;font-weight:bold;color:#4c95d0;transform:scaleX(0.916);">SOC</div>
<div id="t11" class="t" style="left:14.50px;transform-origin:left center;top:71.54px;font-size:6.7px;line-height:8.71px;font-weight:normal;color:#333;transform:scaleX(0.955);">Время работы: 71 д., 16 ч., 57 мин.</div>
<div id="t12" class="t" style="left:127.70px;transform-origin:left center;top:71.54px;font-size:6.7px;line-height:8.71px;font-weight:normal;color:#333;transform:scaleX(0.956);">Пользователей: 0</div>
<div id="t13" class="t" style="left:187.40px;transform-origin:left center;top:71.54px;font-size:6.7px;line-height:8.71px;font-weight:normal;color:#7c98c2;transform:scaleX(0.984);">(показать)</div>
<div id="t14" class="t" style="left:357.50px;transform-origin:left center;top:72.17px;font-size:6.5px;line-height:8.45px;font-weight:normal;color:#333;transform:scaleX(0.949);-webkit-text-stroke:0.05px #333;">Добавить виджет</div>
<div id="t15" class="t" style="left:429.60px;transform-origin:left center;top:72.17px;font-size:6.5px;line-height:8.45px;font-weight:normal;color:#333;transform:scaleX(0.887);-webkit-text-stroke:0.05px #333;">Обновить</div>
<div id="t16" class="t" style="left:470.50px;transform-origin:left center;top:72.17px;font-size:6.5px;line-height:8.45px;font-weight:normal;color:#333;transform:scaleX(0.901);-webkit-text-stroke:0.05px #333;">Обновлять вручную</div>
<div id="t17" class="t" style="left:547.30px;transform-origin:left center;top:71.54px;font-size:6.7px;line-height:8.71px;font-weight:normal;color:#333;transform:scaleX(0.955);">Синхронизовать графики:</div>
<div id="t18" class="t" style="left:14.60px;transform-origin:left center;top:90.12px;font-size:7.2px;line-height:9.36px;font-weight:bold;color:#2a6dbb;transform:scaleX(0.830);">Топ 10 пользователей веб</div>
<div id="t19" class="t" style="left:151.40px;transform-origin:left center;top:90.91px;font-size:6.6px;line-height:8.58px;font-weight:normal;color:#6a95c8;transform:scaleX(0.971);text-decoration:underline;text-decoration-color:#a9c4e6;text-decoration-thickness:0.5px;text-underline-offset:0.6px;">Год</div>
<div id="t20" class="t" style="left:171.00px;transform-origin:left center;top:90.91px;font-size:6.6px;line-height:8.58px;font-weight:bold;color:#2166c0;transform:scaleX(0.959);">Месяц</div>
<div id="t21" class="t" style="left:200.00px;transform-origin:left center;top:90.91px;font-size:6.6px;line-height:8.58px;font-weight:normal;color:#6a95c8;transform:scaleX(0.948);text-decoration:underline;text-decoration-color:#a9c4e6;text-decoration-thickness:0.5px;text-underline-offset:0.6px;">Неделя</div>
<div id="t22" class="t" style="left:231.70px;transform-origin:left center;top:90.91px;font-size:6.6px;line-height:8.58px;font-weight:normal;color:#6a95c8;transform:scaleX(0.986);text-decoration:underline;text-decoration-color:#a9c4e6;text-decoration-thickness:0.5px;text-underline-offset:0.6px;">День</div>
<div id="t23" class="t" style="left:256.00px;transform-origin:left center;top:90.91px;font-size:6.6px;line-height:8.58px;font-weight:normal;color:#6a95c8;transform:scaleX(0.933);text-decoration:underline;text-decoration-color:#a9c4e6;text-decoration-thickness:0.5px;text-underline-offset:0.6px;">Сейчас</div>
<div id="t24" class="t" style="left:327.60px;transform-origin:left center;top:90.12px;font-size:7.2px;line-height:9.36px;font-weight:bold;color:#2a6dbb;transform:scaleX(0.828);">Атаки СОВ по уровням угрозы</div>
<div id="t25" class="t" style="left:458.90px;transform-origin:left center;top:90.91px;font-size:6.6px;line-height:8.58px;font-weight:bold;color:#2166c0;transform:scaleX(0.883);">Год</div>
<div id="t26" class="t" style="left:478.50px;transform-origin:left center;top:90.91px;font-size:6.6px;line-height:8.58px;font-weight:normal;color:#6a95c8;text-decoration:underline;text-decoration-color:#a9c4e6;text-decoration-thickness:0.5px;text-underline-offset:0.6px;">Месяц</div>
<div id="t27" class="t" style="left:507.50px;transform-origin:left center;top:90.91px;font-size:6.6px;line-height:8.58px;font-weight:normal;color:#6a95c8;transform:scaleX(0.948);text-decoration:underline;text-decoration-color:#a9c4e6;text-decoration-thickness:0.5px;text-underline-offset:0.6px;">Неделя</div>
<div id="t28" class="t" style="left:539.20px;transform-origin:left center;top:90.91px;font-size:6.6px;line-height:8.58px;font-weight:normal;color:#6a95c8;transform:scaleX(0.986);text-decoration:underline;text-decoration-color:#a9c4e6;text-decoration-thickness:0.5px;text-underline-offset:0.6px;">День</div>
<div id="t29" class="t" style="left:563.50px;transform-origin:left center;top:90.91px;font-size:6.6px;line-height:8.58px;font-weight:normal;color:#6a95c8;transform:scaleX(0.933);text-decoration:underline;text-decoration-color:#a9c4e6;text-decoration-thickness:0.5px;text-underline-offset:0.6px;">Сейчас</div>
<div id="t30" class="t" style="left:14.60px;transform-origin:left center;top:226.12px;font-size:7.2px;line-height:9.36px;font-weight:bold;color:#2a6dbb;transform:scaleX(0.841);">Топ 10 приложений</div>
<div id="t31" class="t" style="left:151.40px;transform-origin:left center;top:227.01px;font-size:6.6px;line-height:8.58px;font-weight:normal;color:#6a95c8;transform:scaleX(0.971);text-decoration:underline;text-decoration-color:#a9c4e6;text-decoration-thickness:0.5px;text-underline-offset:0.6px;">Год</div>
<div id="t32" class="t" style="left:171.00px;transform-origin:left center;top:227.01px;font-size:6.6px;line-height:8.58px;font-weight:bold;color:#2166c0;transform:scaleX(0.959);">Месяц</div>
<div id="t33" class="t" style="left:200.00px;transform-origin:left center;top:227.01px;font-size:6.6px;line-height:8.58px;font-weight:normal;color:#6a95c8;transform:scaleX(0.948);text-decoration:underline;text-decoration-color:#a9c4e6;text-decoration-thickness:0.5px;text-underline-offset:0.6px;">Неделя</div>
<div id="t34" class="t" style="left:231.70px;transform-origin:left center;top:227.01px;font-size:6.6px;line-height:8.58px;font-weight:normal;color:#6a95c8;transform:scaleX(0.986);text-decoration:underline;text-decoration-color:#a9c4e6;text-decoration-thickness:0.5px;text-underline-offset:0.6px;">День</div>
<div id="t35" class="t" style="left:256.00px;transform-origin:left center;top:227.01px;font-size:6.6px;line-height:8.58px;font-weight:normal;color:#6a95c8;transform:scaleX(0.933);text-decoration:underline;text-decoration-color:#a9c4e6;text-decoration-thickness:0.5px;text-underline-offset:0.6px;">Сейчас</div>
<div id="t36" class="t" style="left:327.60px;transform-origin:left center;top:226.12px;font-size:7.2px;line-height:9.36px;font-weight:bold;color:#2a6dbb;transform:scaleX(0.836);">Последние 10 атак СОВ</div>
<div id="t37" class="t" style="left:458.90px;transform-origin:left center;top:227.01px;font-size:6.6px;line-height:8.58px;font-weight:bold;color:#2166c0;transform:scaleX(0.883);">Год</div>
<div id="t38" class="t" style="left:478.50px;transform-origin:left center;top:227.01px;font-size:6.6px;line-height:8.58px;font-weight:normal;color:#6a95c8;text-decoration:underline;text-decoration-color:#a9c4e6;text-decoration-thickness:0.5px;text-underline-offset:0.6px;">Месяц</div>
<div id="t39" class="t" style="left:507.50px;transform-origin:left center;top:227.01px;font-size:6.6px;line-height:8.58px;font-weight:normal;color:#6a95c8;transform:scaleX(0.948);text-decoration:underline;text-decoration-color:#a9c4e6;text-decoration-thickness:0.5px;text-underline-offset:0.6px;">Неделя</div>
<div id="t40" class="t" style="left:539.20px;transform-origin:left center;top:227.01px;font-size:6.6px;line-height:8.58px;font-weight:normal;color:#6a95c8;transform:scaleX(0.986);text-decoration:underline;text-decoration-color:#a9c4e6;text-decoration-thickness:0.5px;text-underline-offset:0.6px;">День</div>
<div id="t41" class="t" style="left:563.50px;transform-origin:left center;top:227.01px;font-size:6.6px;line-height:8.58px;font-weight:normal;color:#6a95c8;transform:scaleX(0.933);text-decoration:underline;text-decoration-color:#a9c4e6;text-decoration-thickness:0.5px;text-underline-offset:0.6px;">Сейчас</div>
<div id="t42" class="t" style="left:14.60px;transform-origin:left center;top:361.02px;font-size:7.2px;line-height:9.36px;font-weight:bold;color:#2a6dbb;transform:scaleX(0.836);">Топ 10 доменов</div>
<div id="t43" class="t" style="left:151.40px;transform-origin:left center;top:362.81px;font-size:6.6px;line-height:8.58px;font-weight:normal;color:#6a95c8;transform:scaleX(0.971);text-decoration:underline;text-decoration-color:#a9c4e6;text-decoration-thickness:0.5px;text-underline-offset:0.6px;">Год</div>
<div id="t44" class="t" style="left:171.00px;transform-origin:left center;top:362.81px;font-size:6.6px;line-height:8.58px;font-weight:bold;color:#2166c0;transform:scaleX(0.959);">Месяц</div>
<div id="t45" class="t" style="left:200.00px;transform-origin:left center;top:362.81px;font-size:6.6px;line-height:8.58px;font-weight:normal;color:#6a95c8;transform:scaleX(0.948);text-decoration:underline;text-decoration-color:#a9c4e6;text-decoration-thickness:0.5px;text-underline-offset:0.6px;">Неделя</div>
<div id="t46" class="t" style="left:231.70px;transform-origin:left center;top:362.81px;font-size:6.6px;line-height:8.58px;font-weight:normal;color:#6a95c8;transform:scaleX(0.986);text-decoration:underline;text-decoration-color:#a9c4e6;text-decoration-thickness:0.5px;text-underline-offset:0.6px;">День</div>
<div id="t47" class="t" style="left:256.00px;transform-origin:left center;top:362.81px;font-size:6.6px;line-height:8.58px;font-weight:normal;color:#6a95c8;transform:scaleX(0.933);text-decoration:underline;text-decoration-color:#a9c4e6;text-decoration-thickness:0.5px;text-underline-offset:0.6px;">Сейчас</div>
<div id="t48" class="t" style="left:327.60px;transform-origin:left center;top:361.02px;font-size:7.2px;line-height:9.36px;font-weight:bold;color:#2a6dbb;transform:scaleX(0.824);">График атак СОВ</div>
<div id="t49" class="t" style="left:458.90px;transform-origin:left center;top:362.81px;font-size:6.6px;line-height:8.58px;font-weight:bold;color:#2166c0;transform:scaleX(0.883);">Год</div>
<div id="t50" class="t" style="left:478.50px;transform-origin:left center;top:362.81px;font-size:6.6px;line-height:8.58px;font-weight:normal;color:#6a95c8;text-decoration:underline;text-decoration-color:#a9c4e6;text-decoration-thickness:0.5px;text-underline-offset:0.6px;">Месяц</div>
<div id="t51" class="t" style="left:507.50px;transform-origin:left center;top:362.81px;font-size:6.6px;line-height:8.58px;font-weight:normal;color:#6a95c8;transform:scaleX(0.948);text-decoration:underline;text-decoration-color:#a9c4e6;text-decoration-thickness:0.5px;text-underline-offset:0.6px;">Неделя</div>
<div id="t52" class="t" style="left:539.20px;transform-origin:left center;top:362.81px;font-size:6.6px;line-height:8.58px;font-weight:normal;color:#6a95c8;transform:scaleX(0.986);text-decoration:underline;text-decoration-color:#a9c4e6;text-decoration-thickness:0.5px;text-underline-offset:0.6px;">День</div>
<div id="t53" class="t" style="left:563.50px;transform-origin:left center;top:362.81px;font-size:6.6px;line-height:8.58px;font-weight:normal;color:#6a95c8;transform:scaleX(0.933);text-decoration:underline;text-decoration-color:#a9c4e6;text-decoration-thickness:0.5px;text-underline-offset:0.6px;">Сейчас</div>
<div id="t54" class="t" style="left:80.19px;transform-origin:center center;top:202.58px;font-size:6.5px;line-height:8.45px;font-weight:normal;color:#444;">0</div>
<div id="t55" class="t" style="left:101.46px;transform-origin:center center;top:202.58px;font-size:6.5px;line-height:8.45px;font-weight:normal;color:#444;">25</div>
<div id="t56" class="t" style="left:124.54px;transform-origin:center center;top:202.58px;font-size:6.5px;line-height:8.45px;font-weight:normal;color:#444;">50</div>
<div id="t57" class="t" style="left:147.62px;transform-origin:center center;top:202.58px;font-size:6.5px;line-height:8.45px;font-weight:normal;color:#444;">75</div>
<div id="t58" class="t" style="left:168.89px;transform-origin:center center;top:202.58px;font-size:6.5px;line-height:8.45px;font-weight:normal;color:#444;">100</div>
<div id="t59" class="t" style="left:191.97px;transform-origin:center center;top:202.58px;font-size:6.5px;line-height:8.45px;font-weight:normal;color:#444;">125</div>
<div id="t60" class="t" style="left:215.05px;transform-origin:center center;top:202.58px;font-size:6.5px;line-height:8.45px;font-weight:normal;color:#444;">150</div>
<div id="t61" class="t" style="left:238.13px;transform-origin:center center;top:202.58px;font-size:6.5px;line-height:8.45px;font-weight:normal;color:#444;">175</div>
<div id="t62" class="t" style="left:261.21px;transform-origin:center center;top:202.58px;font-size:6.5px;line-height:8.45px;font-weight:normal;color:#444;">200</div>
<div id="t63" class="t" style="left:284.29px;transform-origin:center center;top:202.58px;font-size:6.5px;line-height:8.45px;font-weight:normal;color:#444;">225</div>
<div id="t64" class="t" style="left:307.37px;transform-origin:center center;top:202.58px;font-size:6.5px;line-height:8.45px;font-weight:normal;color:#444;">250</div>
<div id="t65" class="t" style="left:19.40px;transform-origin:left center;top:151.08px;font-size:6.5px;line-height:8.45px;font-weight:normal;color:#444;transform:scaleX(0.961);">Usergate demo user</div>
<div id="t66" class="t" style="left:422.40px;transform-origin:left center;top:139.12px;font-size:17.5px;line-height:22.75px;font-weight:normal;color:#e58b33;transform:scaleX(0.971);">36%</div>
<div id="t67" class="t" style="left:426.00px;transform-origin:left center;top:159.33px;font-size:11.5px;line-height:14.95px;font-weight:normal;color:#e99956;transform:scaleX(1.055);">1889</div>
<div id="t68" class="t" style="left:422.60px;transform-origin:left center;top:174.42px;font-size:5.2px;line-height:6.76px;font-weight:bold;color:#fff;width:5px;text-align:center;">4</div>
<div id="t69" class="t" style="left:430.30px;transform-origin:left center;top:174.11px;font-size:6.3px;line-height:8.19px;font-weight:normal;color:#666;transform:scaleX(1.082);">высокий</div>
<div id="t70" class="t" style="left:490.40px;transform-origin:left center;top:139.12px;font-size:17.5px;line-height:22.75px;font-weight:normal;color:#f25e2c;transform:scaleX(0.971);">64%</div>
<div id="t71" class="t" style="left:493.60px;transform-origin:left center;top:159.33px;font-size:11.5px;line-height:14.95px;font-weight:normal;color:#f26b3c;transform:scaleX(1.071);">3320</div>
<div id="t72" class="t" style="left:481.70px;transform-origin:left center;top:174.42px;font-size:5.2px;line-height:6.76px;font-weight:bold;color:#fff;width:4.9px;text-align:center;">5</div>
<div id="t73" class="t" style="left:489.00px;transform-origin:left center;top:174.11px;font-size:6.3px;line-height:8.19px;font-weight:normal;color:#666;transform:scaleX(1.043);">очень высокий</div>
<div id="t74" class="t" style="left:64.79px;transform-origin:center center;top:338.27px;font-size:6.5px;line-height:8.45px;font-weight:normal;color:#444;">0</div>
<div id="t75" class="t" style="left:93.76px;transform-origin:center center;top:338.27px;font-size:6.5px;line-height:8.45px;font-weight:normal;color:#444;">20</div>
<div id="t76" class="t" style="left:124.54px;transform-origin:center center;top:338.27px;font-size:6.5px;line-height:8.45px;font-weight:normal;color:#444;">40</div>
<div id="t77" class="t" style="left:155.32px;transform-origin:center center;top:338.27px;font-size:6.5px;line-height:8.45px;font-weight:normal;color:#444;">60</div>
<div id="t78" class="t" style="left:186.10px;transform-origin:center center;top:338.27px;font-size:6.5px;line-height:8.45px;font-weight:normal;color:#444;">80</div>
<div id="t79" class="t" style="left:215.07px;transform-origin:center center;top:338.27px;font-size:6.5px;line-height:8.45px;font-weight:normal;color:#444;">100</div>
<div id="t80" class="t" style="left:245.85px;transform-origin:center center;top:338.27px;font-size:6.5px;line-height:8.45px;font-weight:normal;color:#444;">120</div>
<div id="t81" class="t" style="left:276.63px;transform-origin:center center;top:338.27px;font-size:6.5px;line-height:8.45px;font-weight:normal;color:#444;">140</div>
<div id="t82" class="t" style="left:307.41px;transform-origin:center center;top:338.27px;font-size:6.5px;line-height:8.45px;font-weight:normal;color:#444;">160</div>
<div id="t83" class="t" style="left:44.50px;transform-origin:left center;top:255.63px;font-size:6.5px;line-height:8.45px;font-weight:normal;color:#444;transform:scaleX(0.942);">HTTP</div>
<div id="t84" class="t" style="left:36.60px;transform-origin:left center;top:271.27px;font-size:6.5px;line-height:8.45px;font-weight:normal;color:#444;transform:scaleX(0.919);">SSL/TLS</div>
<div id="t85" class="t" style="left:52.30px;transform-origin:left center;top:286.77px;font-size:6.5px;line-height:8.45px;font-weight:normal;color:#444;transform:scaleX(0.946);">VK</div>
<div id="t86" class="t" style="left:37.80px;transform-origin:left center;top:302.43px;font-size:6.5px;line-height:8.45px;font-weight:normal;color:#444;transform:scaleX(0.951);">Lenta.ru</div>
<div id="t87" class="t" style="left:19.80px;transform-origin:left center;top:318.03px;font-size:6.5px;line-height:8.45px;font-weight:normal;color:#444;transform:scaleX(0.988);">Microsoft Bing</div>
<div id="t88" class="t" style="left:334.00px;transform-origin:left center;top:247.34px;font-size:6.4px;line-height:8.32px;font-weight:bold;color:#5a5a5a;transform:scaleX(0.846);">Время</div>
<div id="t89" class="t" style="left:397.20px;transform-origin:left center;top:247.34px;font-size:6.4px;line-height:8.32px;font-weight:bold;color:#5a5a5a;transform:scaleX(0.850);">Сигнатуры СОВ</div>
<div id="t90" class="t" style="left:489.20px;transform-origin:left center;top:247.34px;font-size:6.4px;line-height:8.32px;font-weight:bold;color:#5a5a5a;transform:scaleX(0.880);">IP источника</div>
<div id="t91" class="t" style="left:555.00px;transform-origin:left center;top:247.34px;font-size:6.4px;line-height:8.32px;font-weight:bold;color:#5a5a5a;transform:scaleX(0.874);">IP назначения</div>
<div id="t92" class="t" style="left:334.00px;transform-origin:left center;top:261.04px;font-size:6.4px;line-height:8.32px;font-weight:normal;color:#7893c3;transform:scaleX(0.964);">28 сентября 202...</div>
<div id="t93" class="t" style="left:397.00px;transform-origin:left center;top:261.40px;font-size:6.0px;line-height:7.80px;font-weight:bold;color:#fff;width:6.3px;text-align:center;">S</div>
<div id="t94" class="t" style="left:405.10px;transform-origin:left center;top:261.12px;font-size:6.27px;line-height:8.15px;font-weight:normal;color:#555;">Citrix Bleed</div>
<div id="t95" class="t" style="left:498.90px;transform-origin:left center;top:261.76px;font-size:6.37px;line-height:8.28px;font-weight:normal;color:#555;">65.21.85.22</div>
<div id="t96" class="t" style="left:565.30px;transform-origin:left center;top:261.77px;font-size:6.35px;line-height:8.25px;font-weight:normal;color:#555;">20.190.181.0</div>
<div id="t97" class="t" style="left:334.00px;transform-origin:left center;top:274.79px;font-size:6.4px;line-height:8.32px;font-weight:normal;color:#7893c3;transform:scaleX(0.964);">28 сентября 202...</div>
<div id="t98" class="t" style="left:397.00px;transform-origin:left center;top:275.15px;font-size:6.0px;line-height:7.80px;font-weight:bold;color:#fff;width:6.3px;text-align:center;">S</div>
<div id="t99" class="t" style="left:405.10px;transform-origin:left center;top:274.87px;font-size:6.27px;line-height:8.15px;font-weight:normal;color:#555;">Citrix Bleed</div>
<div id="t100" class="t" style="left:498.90px;transform-origin:left center;top:275.51px;font-size:6.37px;line-height:8.28px;font-weight:normal;color:#555;">65.21.85.22</div>
<div id="t101" class="t" style="left:565.30px;transform-origin:left center;top:275.52px;font-size:6.35px;line-height:8.25px;font-weight:normal;color:#555;">20.190.177.82</div>
<div id="t102" class="t" style="left:334.00px;transform-origin:left center;top:288.54px;font-size:6.4px;line-height:8.32px;font-weight:normal;color:#7893c3;transform:scaleX(0.964);">28 сентября 202...</div>
<div id="t103" class="t" style="left:397.00px;transform-origin:left center;top:288.90px;font-size:6.0px;line-height:7.80px;font-weight:bold;color:#fff;width:6.3px;text-align:center;">S</div>
<div id="t104" class="t" style="left:405.10px;transform-origin:left center;top:288.62px;font-size:6.27px;line-height:8.15px;font-weight:normal;color:#555;">Citrix Bleed</div>
<div id="t105" class="t" style="left:498.90px;transform-origin:left center;top:289.26px;font-size:6.37px;line-height:8.28px;font-weight:normal;color:#555;">65.21.85.22</div>
<div id="t106" class="t" style="left:565.30px;transform-origin:left center;top:289.27px;font-size:6.35px;line-height:8.25px;font-weight:normal;color:#555;">20.190.181.1</div>
<div id="t107" class="t" style="left:334.00px;transform-origin:left center;top:302.29px;font-size:6.4px;line-height:8.32px;font-weight:normal;color:#7893c3;transform:scaleX(0.964);">28 сентября 202...</div>
<div id="t108" class="t" style="left:397.00px;transform-origin:left center;top:302.65px;font-size:6.0px;line-height:7.80px;font-weight:bold;color:#fff;width:6.3px;text-align:center;">S</div>
<div id="t109" class="t" style="left:405.10px;transform-origin:left center;top:302.37px;font-size:6.27px;line-height:8.15px;font-weight:normal;color:#555;width:78.4px;overflow:hidden;">Apache TomCat Path Traversal</div>
<div id="t110" class="t" style="left:498.90px;transform-origin:left center;top:303.01px;font-size:6.37px;line-height:8.28px;font-weight:normal;color:#555;">213.152.161.69</div>
<div id="t111" class="t" style="left:565.30px;transform-origin:left center;top:303.02px;font-size:6.35px;line-height:8.25px;font-weight:normal;color:#555;">193.163.77.16</div>
<div id="t112" class="t" style="left:334.00px;transform-origin:left center;top:316.04px;font-size:6.4px;line-height:8.32px;font-weight:normal;color:#7893c3;transform:scaleX(0.964);">27 сентября 202...</div>
<div id="t113" class="t" style="left:397.00px;transform-origin:left center;top:316.40px;font-size:6.0px;line-height:7.80px;font-weight:bold;color:#fff;width:6.3px;text-align:center;">S</div>
<div id="t114" class="t" style="left:405.10px;transform-origin:left center;top:316.12px;font-size:6.27px;line-height:8.15px;font-weight:normal;color:#555;width:78.4px;overflow:hidden;">Apache TomCat Path Traversal</div>
<div id="t115" class="t" style="left:498.90px;transform-origin:left center;top:316.76px;font-size:6.37px;line-height:8.28px;font-weight:normal;color:#555;">213.152.161.69</div>
<div id="t116" class="t" style="left:565.30px;transform-origin:left center;top:316.77px;font-size:6.35px;line-height:8.25px;font-weight:normal;color:#555;">65.109.121.113</div>
<div id="t117" class="t" style="left:334.00px;transform-origin:left center;top:329.79px;font-size:6.4px;line-height:8.32px;font-weight:normal;color:#7893c3;transform:scaleX(0.964);">26 сентября 202...</div>
<div id="t118" class="t" style="left:397.00px;transform-origin:left center;top:330.15px;font-size:6.0px;line-height:7.80px;font-weight:bold;color:#fff;width:6.3px;text-align:center;">S</div>
<div id="t119" class="t" style="left:405.10px;transform-origin:left center;top:329.87px;font-size:6.27px;line-height:8.15px;font-weight:normal;color:#555;width:78.4px;overflow:hidden;">Apache TomCat Path Traversal</div>
<div id="t120" class="t" style="left:498.90px;transform-origin:left center;top:330.51px;font-size:6.37px;line-height:8.28px;font-weight:normal;color:#555;">94.228.168.84</div>
<div id="t121" class="t" style="left:565.30px;transform-origin:left center;top:330.52px;font-size:6.35px;line-height:8.25px;font-weight:normal;color:#555;">47.246.133.144</div>
<div id="t122" class="t" style="left:334.00px;transform-origin:left center;top:343.54px;font-size:6.4px;line-height:8.32px;font-weight:normal;color:#7893c3;transform:scaleX(0.964);">26 сентября 202...</div>
<div id="t123" class="t" style="left:397.00px;transform-origin:left center;top:343.90px;font-size:6.0px;line-height:7.80px;font-weight:bold;color:#fff;width:6.3px;text-align:center;">S</div>
<div id="t124" class="t" style="left:405.10px;transform-origin:left center;top:343.62px;font-size:6.27px;line-height:8.15px;font-weight:normal;color:#555;width:78.4px;overflow:hidden;">Apache TomCat Path Traversal</div>
<div id="t125" class="t" style="left:498.90px;transform-origin:left center;top:344.26px;font-size:6.37px;line-height:8.28px;font-weight:normal;color:#555;">94.228.168.84</div>
<div id="t126" class="t" style="left:565.30px;transform-origin:left center;top:344.27px;font-size:6.35px;line-height:8.25px;font-weight:normal;color:#555;">47.246.133.142</div>
<div id="t127" class="t" style="right:602.80px;transform-origin:right center;top:387.71px;font-size:6.45px;line-height:8.38px;font-weight:normal;color:#3a3a3a;">yandex.ru</div>
<div id="t128" class="t" style="right:602.80px;transform-origin:right center;top:395.23px;font-size:6.45px;line-height:8.38px;font-weight:normal;color:#3a3a3a;">lenta.ru</div>
<div id="t129" class="t" style="right:602.80px;transform-origin:right center;top:402.75px;font-size:6.45px;line-height:8.38px;font-weight:normal;color:#3a3a3a;">google.ru</div>
<div id="t130" class="t" style="right:602.80px;transform-origin:right center;top:410.27px;font-size:6.45px;line-height:8.38px;font-weight:normal;color:#3a3a3a;">vk.com</div>
<div id="t131" class="t" style="right:602.80px;transform-origin:right center;top:417.79px;font-size:6.45px;line-height:8.38px;font-weight:normal;color:#3a3a3a;">bing.com</div>
<div id="t132" class="t" style="right:602.80px;transform-origin:right center;top:425.31px;font-size:6.45px;line-height:8.38px;font-weight:normal;color:#3a3a3a;">eicar.org</div>
<div id="t133" class="t" style="right:602.80px;transform-origin:right center;top:432.83px;font-size:6.45px;line-height:8.38px;font-weight:normal;color:#3a3a3a;">gov.ru</div>
<div id="t134" class="t" style="right:602.80px;transform-origin:right center;top:440.35px;font-size:6.45px;line-height:8.38px;font-weight:normal;color:#3a3a3a;">cnn.com</div>
<div id="t135" class="t" style="right:602.80px;transform-origin:right center;top:447.87px;font-size:6.45px;line-height:8.38px;font-weight:normal;color:#3a3a3a;">dojki.com</div>
<div id="t136" class="t" style="right:602.80px;transform-origin:right center;top:455.39px;font-size:6.45px;line-height:8.38px;font-weight:normal;color:#3a3a3a;">xakep.ru</div>
<div id="t137" class="t" style="right:294.00px;transform-origin:right center;top:379.23px;font-size:5.8px;line-height:7.54px;font-weight:normal;color:#444;">1000</div>
<div id="t138" class="t" style="right:294.00px;transform-origin:right center;top:390.53px;font-size:5.8px;line-height:7.54px;font-weight:normal;color:#444;">800</div>
<div id="t139" class="t" style="right:294.00px;transform-origin:right center;top:403.83px;font-size:5.8px;line-height:7.54px;font-weight:normal;color:#444;">600</div>
<div id="t140" class="t" style="right:294.00px;transform-origin:right center;top:416.33px;font-size:5.8px;line-height:7.54px;font-weight:normal;color:#444;">400</div>
<div id="t141" class="t" style="right:294.00px;transform-origin:right center;top:428.93px;font-size:5.8px;line-height:7.54px;font-weight:normal;color:#444;">200</div>
<div id="t142" class="t" style="right:294.00px;transform-origin:right center;top:441.23px;font-size:5.8px;line-height:7.54px;font-weight:normal;color:#444;">0</div>
<div id="t143" class="t" style="left:340.80px;transform-origin:center center;top:448.06px;font-size:5.45px;line-height:7.09px;font-weight:normal;color:#333;">10 Июнь 2024</div>
<div id="t144" class="t" style="left:397.69px;transform-origin:center center;top:448.06px;font-size:5.45px;line-height:7.09px;font-weight:normal;color:#333;">3 Июль 2024</div>
<div id="t145" class="t" style="left:452.18px;transform-origin:center center;top:448.06px;font-size:5.45px;line-height:7.09px;font-weight:normal;color:#333;">26 Июль 2024</div>
<div id="t146" class="t" style="left:509.86px;transform-origin:center center;top:448.06px;font-size:5.45px;line-height:7.09px;font-weight:normal;color:#333;">18 Авг 2024</div>
<div id="t147" class="t" style="left:563.39px;transform-origin:center center;top:448.06px;font-size:5.45px;line-height:7.09px;font-weight:normal;color:#333;">10 Сент 2024</div>
<div id="t148" class="t" style="left:338.20px;transform-origin:left center;top:456.31px;font-size:6.3px;line-height:8.19px;font-weight:bold;color:#222;transform:scaleX(0.901);">28 Сент 0:00:00</div>
<div id="t149" class="t" style="left:392.50px;transform-origin:left center;top:456.11px;font-size:6.6px;line-height:8.58px;font-weight:normal;color:#3d8fe0;transform:scaleX(0.942);">Атаки СОВ:</div>
<div id="t150" class="t" style="left:428.00px;transform-origin:left center;top:456.11px;font-size:6.6px;line-height:8.58px;font-weight:bold;color:#222;transform:scaleX(0.926);">4</div>
<div id="t151" class="t" style="left:433.10px;transform-origin:left center;top:456.11px;font-size:6.6px;line-height:8.58px;font-weight:normal;color:#333;transform:scaleX(0.990);">событий</div>
</body></html>
